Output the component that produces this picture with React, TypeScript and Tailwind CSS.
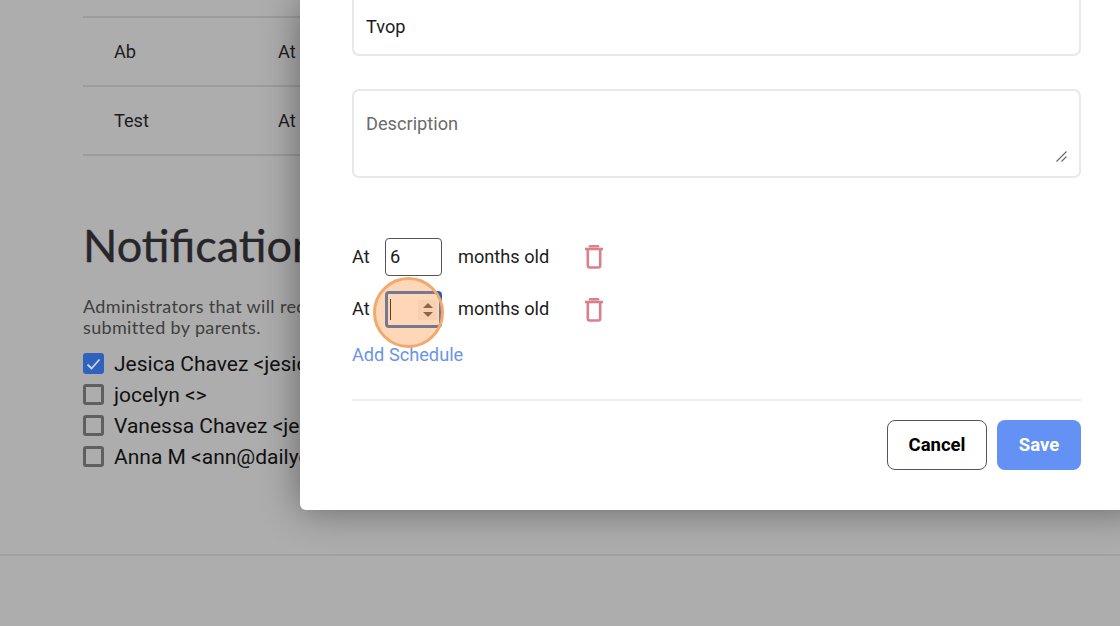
const sans = "font-['Roboto',sans-serif]";

function TrashIcon() {
  return (
    <svg className="mb-px ml-px" width="18" height="25" viewBox="0 0 18 25" fill="none" stroke="#d9808a" strokeWidth="2.6">
      <path d="M0 5h18" />
      <path d="M5 2.2h8" strokeLinecap="round" />
      <path d="M2.8 5v16.5a2 2 0 0 0 2 2h8.4a2 2 0 0 0 2-2V5" />
    </svg>
  );
}

function ScheduleRow({ children }: { children: React.ReactNode }) {
  return (
    <div className="flex items-center text-[18.2px] text-[#1c1c1c]">
      <span className="w-[33px] pb-px">At</span>
      {children}
      <span className="ml-4 w-[126px] pb-px">months old</span>
      <TrashIcon />
    </div>
  );
}

function AdminRow({ label, checked }: { label: string; checked?: boolean }) {
  return (
    <div className="flex h-[31px] items-center gap-[10px] text-[21px] whitespace-nowrap text-[#111]">
      {checked ? (
        <span className="flex h-[21px] w-[21px] items-center justify-center rounded-[3px] bg-[#2f62bd]">
          <svg width="15" height="12" viewBox="0 0 15 12" fill="none" stroke="#c9d6ee" strokeWidth="1.8">
            <path d="M1.5 6.5 5.5 10.5 13.5 1.5" />
          </svg>
        </span>
      ) : (
        <span className="h-[21px] w-[21px] rounded-[3px] border-[3px] border-[#5f5f5f]" />
      )}
      <span className="mt-[2px]">{label}</span>
    </div>
  );
}

export default function App() {
  return (
    <div className={`relative h-[626px] w-[1120px] overflow-hidden bg-[#adadad] ${sans}`}>
      {/* page behind the dialog */}
      <div className="h-[556px] border-b-2 border-[#a0a0a0] pl-[83px] pt-4">
        <div className="w-[300px] text-[18.2px] text-[#1c1c1c]">
          <div className="flex h-[69px] items-center border-t-2 border-[#9c9c9c] pt-px pl-[31px]">
            <span className="w-[164px]">Ab</span>
            <span>At</span>
          </div>
          <div className="flex h-[71px] items-center border-y-2 border-[#9c9c9c] pl-[31px]">
            <span className="w-[164px]">Test</span>
            <span>At</span>
          </div>
        </div>
        <h2 className="mt-[59px] font-['Lato',sans-serif] text-[45px] leading-[60px] font-normal whitespace-nowrap text-[#26262b] [-webkit-text-stroke:0.35px_#26262b]">
          Notifications
        </h2>
        <p className="mt-[21px] font-['Lato',sans-serif] text-[18px] leading-[21px] tracking-[0.35px] whitespace-nowrap text-[#3f3f3f]">
          Administrators that will receive forms
          <br />
          submitted by parents.
        </p>
        <div className="mt-[10px]">
          <AdminRow checked label="Jesica Chavez <jesica@dailyconnect.com>" />
          <AdminRow label="jocelyn <>" />
          <AdminRow label="Vanessa Chavez <jessica@dailyconnect.com>" />
          <AdminRow label="Anna M <ann@dailyconnect.com>" />
        </div>
      </div>

      {/* dialog */}
      <div className="absolute top-0 left-[300px] h-[510px] w-[840px] overflow-hidden rounded-bl-[6px] bg-white px-[52px] shadow-[0_0_38px_rgba(0,0,0,0.42)]">
        <div className="-mt-[10px] flex h-[66px] w-[729px] items-center rounded-[7px] border-2 border-[#e8e8e8] pt-[7px] pl-[12px] text-[18.2px] text-[#1c1c1c]">
          Tvop
        </div>
        <div className="relative mt-[33px] h-[89px] w-[729px] rounded-[7px] border-2 border-[#e8e8e8] pt-[19px] pl-[12px] text-[18.2px] text-[#6b6b6b]">
          Description
          <svg className="absolute right-[12px] bottom-[14px]" width="11" height="11" viewBox="0 0 11 11" stroke="#666" strokeWidth="1.1">
            <path d="M0.5 10.5 10.5 0.5M5.5 10.5 10.5 5.5" />
          </svg>
        </div>

        <div className="mt-[60px] flex flex-col gap-[15px]">
          <ScheduleRow>
            <span className="flex h-[38px] w-[57px] items-center rounded-[4px] border border-[#555] pl-[4px]">6</span>
          </ScheduleRow>
          <ScheduleRow>
            <span className="flex h-[37px] w-[57px] items-center rounded-[4px] border-[3px] border-[#1f5fbf]">
              <span className="ml-[2px] h-[21px] w-px bg-black" />
              <span className="mr-[2px] ml-auto flex h-[20px] w-[19px] flex-col items-center justify-center gap-[4px] bg-[#f3f3f3]">
                <span className="h-0 w-0 border-x-[5px] border-b-[5px] border-x-transparent border-b-[#444]" />
                <span className="h-0 w-0 border-x-[5px] border-t-[5px] border-x-transparent border-t-[#444]" />
              </span>
            </span>
          </ScheduleRow>
        </div>

        <div className="mt-[13px] text-[18.2px] text-[#6a94e6]">Add Schedule</div>

        <div className="mt-[31px] flex w-[729px] justify-end gap-[10px] border-t-2 border-[#ededed] pt-[19px]">
          <button className="h-[50px] w-[100px] rounded-[8px] border-[1.5px] border-[#555] bg-white pt-px text-[18.5px] font-bold text-black">
            Cancel
          </button>
          <button className="h-[50px] w-[84px] rounded-[8px] bg-[#6392f4] pt-px text-[18.5px] font-bold text-white">
            Save
          </button>
        </div>
      </div>

      {/* click highlight */}
      <div className="absolute top-[277px] left-[373px] h-[71px] w-[71px] rounded-full border-[3px] border-[#f4a96c] bg-[#f99a4e]/40" />
    </div>
  );
}
